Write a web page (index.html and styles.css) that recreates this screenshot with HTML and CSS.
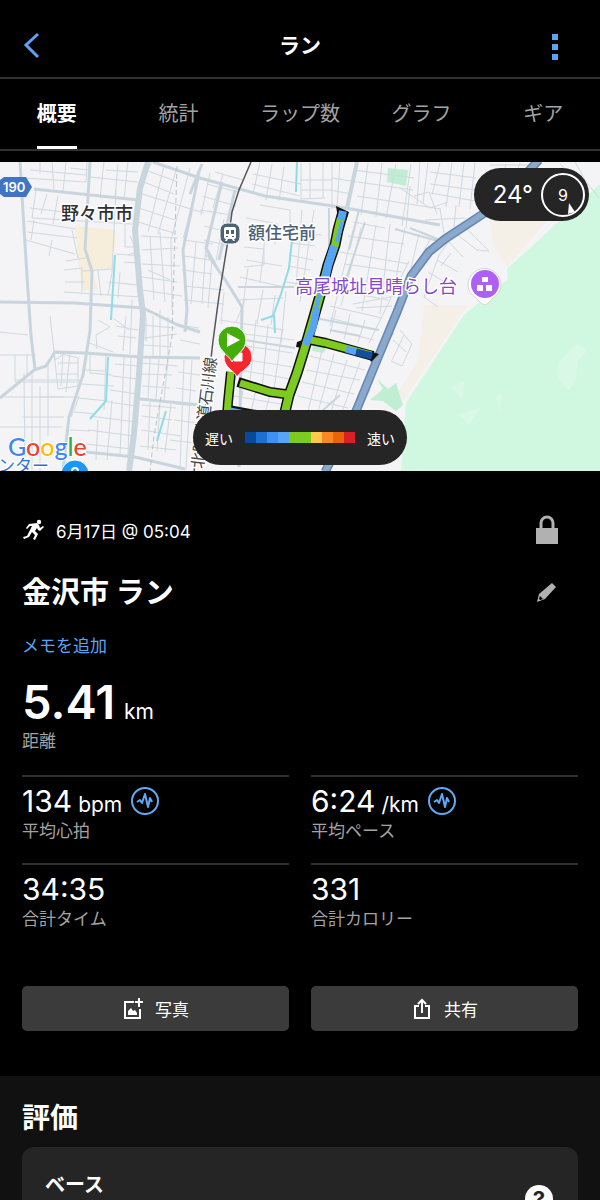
FILE: index.html
```html
<!DOCTYPE html>
<html lang="ja">
<head>
<meta charset="utf-8">
<meta name="viewport" content="width=device-width, initial-scale=1">
<title>ラン</title>
<link rel="stylesheet" href="styles.css">
</head>
<body>
<div class="app">
  <header class="topbar">
    <button class="icon-button" aria-label="戻る">
      <svg width="20" height="28" viewBox="0 0 20 28" fill="none" stroke="#5ba4f5" stroke-width="3"><path d="M16 2 4 13l12 12"/></svg>
    </button>
    <h1 class="topbar-title">ラン</h1>
    <button class="icon-button topbar-menu" aria-label="メニュー">
      <svg width="20" height="28" viewBox="0 0 20 28" fill="#5ba4f5"><path d="M7 2h6v6H7zM7 12h6v6H7zM7 22h6v6H7z"/></svg>
    </button>
  </header>

  <nav class="tabs">
    <a class="tab tab-active" href="#overview">概要</a>
    <a class="tab" href="#stats">統計</a>
    <a class="tab" href="#laps">ラップ数</a>
    <a class="tab" href="#charts">グラフ</a>
    <a class="tab" href="#gear">ギア</a>
  </nav>

  <section class="map" aria-label="ルートマップ">
    <svg class="map-canvas" viewBox="0 162 600 309" preserveAspectRatio="xMidYMid slice">
      <rect y="162" width="600" height="309" fill="#f4f3f6"/>
      <!-- land cover -->
      <path fill="#f4efe7" d="M489 205h72l-54 62-14-22zM424 305h44l-64 95-6-8 20-32z"/>
      <path fill="#f6eedb" d="M75 226l41 4-3 39-21 2 6 18-4 2-12-1-5-42z"/>
      <path fill="#d0f7e0" d="M600 184l-22 20-71 65 1 10-44 36-58 88-5 68h199z"/>
      <path fill="#d9f8e6" d="M576 344l12 6-10 11-2 18-7 12-12-14 2-15zM458 414l24-7-13 17zM496 397l6-5-3 22zM452 387l13-7-3 20z"/>
      <path fill="#bfeed3" d="M388 168l20 2-2 16-19-4zM377 379l11 10 8-6 7 22-7 6-13-10-13-1 13-11zM313 346l14 2-4 5-11-2z"/>

      <!-- side streets -->
      <g fill="none" stroke="#cfd9e0" stroke-width="1">
        <path d="M24 178l62 4 1-20M30 170l56 5M36 190l-4 28 100 6M40 162v12M52 162l2 27M66 162l-3 29M70 168l18 2M47 194l-6 20M58 196l-5 28M30 208l50 6M27 221l48 8M27 232l50 6M26 240l49 14M52 240l-3 16M34 220l-3 20M72 230l6 28M66 261l20-3M64 270l18-2v24M65 282h20M64 292l77 5M83 271l30-2M104 162l-4 36M118 164l-3 34M90 177l48 5M106 170l32 2M128 162l-4 37M116 190l-4 82-4 24M98 271l3 25M125 224v23h12M130 236l7 16-9 3M116 254l25 2M120 272l-2 26M108 282l30 3M124 262l12 1"/>
        <path d="M148 171l30 11M144 182l30 12M142 194l62 19M139 208l36 12M138 222l36 11M164 166l-16 66M176 170l-18 64M190 168l-18 68M152 162l-5 9M200 172l-16 64M141 236l37 2M142 250l36-2M142 264l38 2M142 277l35 5M142 290l40 6M150 236l4 64M160 232l5 70M171 238l1 72M148 270l22 10M183 240l30 4M184 256l26 4M182 270l30 4M184 286l40 4M184 300l40 4M196 242l-5 62M206 244l-4 60M192 214l-9 24"/>
        <path d="M202 196l34 10M207 184l31 8M215 172l28 8M200 210l31 5M223 174l-10 34M210 173l-9 42M213 216l-7 42M224 219l-8 42M204 226l24 6M204 240l22 5M212 258l-4 50M224 292l-3 32M260 162l-7 32M272 164l-6 36M253 174l48 10M252 184l48 12M284 167l-5 34M301 163v36l24-1M310 163v36M323 163v35M300 180h32M301 190h31M332 163v46M340 162l-3 46M332 178l25 4M330 190l22 4M260 205l30 5v20M246 218l32 6-3 20M244 247l20 2v16l-20 2M246 260l36 6M240 277l44 10M238 300l45-2M265 237l-5 46M248 268l-6 44M285 231l37 4M291 243l24 3M289 255l24 5M288 266l22 4M286 282l24 4M302 210l-6 76M314 210l-14 92M246 298l-10 24M263 290l-6 34M275 295l-4 30M286 291l-5 52"/>
        <path d="M354 170l60 8M358 182l55 8M357 196l84 13M353 222l32 6M348 236l56 8M340 252l69 12M344 264l58 8M338 278l58 10M336 290l52 10M330 306l52 12M368 163l-7 52M382 163l-6 54M396 164l-10 54M411 164l-9 62M420 162l-3 42M428 163l-5 40M400 188l30 20 18-6M410 186l-4 42M414 196l15-4 8 22M430 172l46 6M430 184l45 6M431 193l44 8M440 163l-8 32M452 163l-6 44M464 163l-5 44M475 163l-5 46M425 220l40-2M440 209l4 24M456 205l-2 22M405 228l-9 50M419 234l-8 34M430 240l-10 18M390 224l-10 90M376 225l-14 86M361 228l-20 78M353 230l-23 96M409 261l-40 82M395 296l-42 8M392 306l-36 2M464 226l25 25-12-1-22-17M455 233l-16 22-15 42 14 10M448 241l15 16M437 260l21 12M428 272l20 12M451 253l-10 13M490 165h50M506 164l-4 14M520 163l-4 12M400 330l12 14-10 22-11-5M404 335l-12 25M393 340l13 12M394 333l-7 9"/>
        <path d="M0 355h36M50 316l5 44 12-8M0 332l28 3M15 355v27h62M27 355v20M15 380h65M24 373l1 98M32 372v99M40 386v85M48 362v74M0 397h64M0 427h62M22 417h42M40 397h39l-8 20M54 352l24 6v28l-20 3zM58 363h20M56 374h22M63 352l-2 34M70 352l-4 40M83 370l22 1M82 384l32 2M78 398l30 3M74 412l22 2M70 430l20 1M90 353v20l22 2M106 354l-2 56M98 320l12 7-14 8 1 14M87 342l26 10M113 318l16 12M118 336l18 2M116 326l22 4M126 316l-3 35M132 300l-2 54M115 364l24 2M112 376l26 3M110 390l28 4M108 402l28 4M90 416l46 6M88 430l46 6M86 444l46 5M124 357l-4 99M131 358l-3 98M112 400l-5 60M98 420l-2 40"/>
        <path d="M143 325l32 3M144 338l33-4M146 317v24M153 316v40M160 310v46M168 317v39M143 345l30 2M142 363l36 3M142 374l30 1M142 386l28 2M150 359l-2 40M159 359l-3 40M168 360l-4 40M142 405l34 3M142 416l30 4M141 430l40 6M140 446l36 4M150 402l-2 48M160 403l-3 48M171 404l-6 48M179 325l20 3M180 340l20 4M178 372l22 3M176 388l20 3M184 360l-4 110M192 360l-6 110M176 404l22 2M174 420l24 3M170 440l24 3M220 320l64 10M244 334l50 6M240 345l52 8M242 359l50 8M240 370l50 9M256 320l-6 62M268 325l-6 64M282 330l-8 60M234 396l52 9M244 385l-5 27M256 390l-5 22M270 394l-5 20M310 356l55 14M306 370l54 10M302 382l52 12M298 396l50 12M322 350l-14 62M334 354l-16 58M347 360l-16 52M360 362l-18 50M358 336l16 4M330 318l46 12M336 310l-6 24M350 314l-6 25M365 320l-7 22M370 390l-12 22"/>
        <path d="M575 162l10 18 14 18M560 164l13 12"/>
      </g>

      <!-- main roads -->
      <g fill="none" stroke="#c9d5dd">
        <path stroke-width="3" d="M20 162l3 50 4 64 4 60 4 33M0 302l75 1 68 5M34 189l104 11M90 162l-4 70-1 17 7 22-2 60-7 44-14 42-6 53M0 398l34-28 12-4 9-14 30 1 55 4 60 1M143 308l35 17 22 7M198 178l-15 72 4 60-2 22M153 162l47 16M200 178l65 18 68 10 24 4 83 15M235 190l-16 70M217 268l-11-20 16-66M202 164l-12 30M208 255l18 26 16 26-3 160M140 399l60 6M86 452l49 5 50 12"/>
        <path stroke-width="2" d="M238 287h56M329 208v42M365 222l-20 60M395 229l50 14M245 340l50 8M410 228l35 14M330 330l30 6M340 395l-18 16M359 210l-10 40M315 318l64 12"/>
        <path stroke-width="6" d="M148 162l-8 26-5 42 5 60 3 24-4 60-5 60-5 37"/>
        <path stroke-width="4" d="M357 162l-10 46"/>
        <path stroke-width="1" stroke-dasharray="5 3" stroke="#bcc3c9" d="M177 166l-3 100-2 70-18 100-4 35"/>
      </g>

      <!-- waterways -->
      <g fill="none" stroke="#8ddce6" stroke-width="2">
        <path d="M297 162l-1 30M292 240l-3 28-8 26-8 22M273 316l-12 4M115 255l-4 65M108 357l-2 44-16 18M166 411l-9 30M274 315l1 18"/>
      </g>

      <!-- highway -->
      <path fill="none" stroke="#6587af" stroke-width="9" d="M539 160l-20 21-36 33-38 25-16 13-18 24-14 36-20 48-23 56-29 56"/>
      <path fill="none" stroke="#8ba8cd" stroke-width="6" d="M539 160l-20 21-36 33-38 25-16 13-18 24-14 36-20 48-23 56-29 56"/>

      <!-- railway -->
      <path fill="none" stroke="#55565b" stroke-width="1.5" d="M251 162l-12 28-7 22-3 22-10 62-6 45-8 70-11 60"/>

      <text class="map-label label-rail" transform="translate(203 469) rotate(-83)">北陸鉄道石川線</text>

      <!-- run track -->
      <g fill="none" stroke-linejoin="round">
        <path stroke="#111" stroke-width="11" d="M343 212l-5 18-3 15-7 20-7 27-8 28-7 24-9 29-8 22-4 17"/>
        <path stroke="#111" stroke-width="10" d="M306 339l20 4 47 13M292 395l-22-3-32-10M231 372l-3 30-1 14M228 410l28 5"/>
        <path fill="#111" d="M336 206l13 6-3 9-8-3zM297 342l11-4-2 15-4-5-6-1zM366 350l13 4-8 8z"/>
        <path stroke="#7ecb20" stroke-width="8" d="M341 218l-3 12-3 15-7 20-7 27-8 28-7 24-9 29-8 22-4 17"/>
        <path stroke="#7ecb20" stroke-width="7" d="M306 339l20 4 45 12M292 395l-22-3-30-9M231 372l-3 30-1 14"/>
        <path stroke="#55a4f5" stroke-width="8" d="M343 211l-2 9M334 246l-6 20-3 14"/>
        <path stroke="#55a4f5" stroke-width="7" d="M317 308l-4 20-8 17M346 349l10 3M230 411l20 4"/>
        <path stroke="#55a4f5" stroke-width="4" d="M342 222l-5 20M325 275l-11 40"/>
        <path stroke="#114f9c" stroke-width="7" d="M356 352l16 4"/>
      </g>

      <!-- finish and start pins -->
      <g stroke="#fff" stroke-width="1">
        <path fill="#f5262d" d="M237 377c-3-7-13-9-13-20a14 14 0 0 1 28 0c0 11-11 13-15 20z"/>
        <path fill="#fff" d="M234 353h8v8h-8z"/>
        <path fill="#45ad0b" d="M232 362c-3-7-14-11-14-22a14 14 0 0 1 28 0c0 11-11 15-14 22z"/>
        <path fill="#fff" stroke="none" d="M227 333l13 7-13 7z"/>
      </g>

      <!-- station -->
      <rect x="220" y="223" width="20" height="21" rx="7" fill="#4b6275" stroke="#fff"/>
      <path fill="#fff" fill-rule="evenodd" d="M226 227h8q2 0 2 2v8q0 2-2 2l1 2h-2l-1-2h-4l-1 2h-2l1-2q-2 0-2-2v-8q0-2 2-2zm0 3v4h3v-4zm5 0v4h3v-4zm-5 6v1h2v-1zm6 0v1h2v-1z"/>

      <!-- viewpoint pin -->
      <path fill="#fff" stroke="#d5d2dc" d="M485 305q-3 0-7-5c-4-4-10-7-10-15a16 16 0 0 1 33 0c0 8-6 11-10 15q-4 5-6 5z"/>
      <circle cx="485" cy="284" r="14" fill="#ad61f2"/>
      <path fill="#fff" d="M482 277h6v5h-6zM477 285h6v6h-6zM486 285h6v6h-6z"/>

      <!-- route shield -->
      <path fill="#4174c3" d="M0 180l4-3h22l6 10-6 10H4l-4-3z"/>
      <text class="shield-label" x="3" y="192">190</text>

      <text class="map-label label-city" x="61" y="220">野々市市</text>
      <text class="map-label label-station" x="248" y="239">額住宅前</text>
      <text class="map-label label-sight" x="295" y="293">高尾城址見晴らし台</text>

      <circle cx="75" cy="474" r="14" fill="#1898f8" stroke="#fff"/>
      <circle cx="75" cy="471" r="3" fill="none" stroke="#fff" stroke-width="2"/>
      <text class="map-label label-center" x="-2" y="472">ンター</text>
      <text class="map-brand" x="8" y="456"><tspan fill="#4285f4">G</tspan><tspan fill="#ea4335">o</tspan><tspan fill="#fbbc05">o</tspan><tspan fill="#4285f4">g</tspan><tspan fill="#34a853">l</tspan><tspan fill="#ea4335">e</tspan></text>
    </svg>

    <div class="weather">
      <span class="weather-temp">24°</span>
      <span class="weather-wind">9
        <svg class="wind-arrow" width="8" height="12" viewBox="0 0 8 12"><path fill="#fff" d="M2 0l6 9-7 2z"/></svg>
      </span>
    </div>

    <div class="legend">
      <span>遅い</span>
      <div class="legend-scale">
        <i class="s1"></i><i class="s2"></i><i class="s3"></i><i class="s4"></i><i class="s5"></i><i class="s5"></i><i class="s6"></i><i class="s7"></i><i class="s8"></i><i class="s9"></i>
      </div>
      <span>速い</span>
    </div>
  </section>

  <main class="summary" id="overview">
    <div class="row row-date">
      <svg width="24" height="24" viewBox="0 0 24 24" fill="#fff"><circle cx="17" cy="4" r="2.2"/><path d="M7 6l8-1 2 2 1 3 3-2 1 1-4 4-2-1-1-2-2 3 3 3-3 6-2-1 2-4-3-3-3 5-5 2-1-2 4-1 4-8 1-2-2 0-3 3-1-1z"/></svg>
      <span class="date">6月17日 @ 05:04</span>
      <button class="icon-button push" aria-label="非公開">
        <svg width="24" height="30" viewBox="0 0 24 30"><path fill="#b1b1b1" d="M1 13h22v16H1z"/><path fill="none" stroke="#b1b1b1" stroke-width="3" d="M6 14V8a6 6 0 0 1 12 0v6"/></svg>
      </button>
    </div>

    <div class="row row-name">
      <h2 class="activity-name">金沢市 ラン</h2>
      <button class="icon-button push" aria-label="名前を編集">
        <svg width="24" height="24" viewBox="0 0 24 24"><path fill="#b1b1b1" d="M2 21l2-8L17 2l4 4-11 12z"/><path fill="#000" d="M5 15l3 3-3 1-1-1z"/></svg>
      </button>
    </div>

    <a class="memo" href="#memo">メモを追加</a>

    <div class="distance">
      <div class="value value-big">5.41 <span class="unit">km</span></div>
      <div class="caption">距離</div>
    </div>

    <div class="metrics">
      <div class="metric">
        <div class="value">134 <span class="unit">bpm</span>
          <svg class="wave" width="30" height="30" viewBox="0 0 30 30" fill="none" stroke="#61a8f5"><circle cx="15" cy="15" r="13" stroke-width="2"/><path stroke-width="2" stroke-linejoin="round" d="M7 16l3-2 2 3 3-9 3 13 2-9 2 4"/></svg>
        </div>
        <div class="caption">平均心拍</div>
      </div>
      <div class="metric">
        <div class="value">6:24 <span class="unit">/km</span>
          <svg class="wave" width="30" height="30" viewBox="0 0 30 30" fill="none" stroke="#61a8f5"><circle cx="15" cy="15" r="13" stroke-width="2"/><path stroke-width="2" stroke-linejoin="round" d="M7 16l3-2 2 3 3-9 3 13 2-9 2 4"/></svg>
        </div>
        <div class="caption">平均ペース</div>
      </div>
      <div class="metric">
        <div class="value">34:35</div>
        <div class="caption">合計タイム</div>
      </div>
      <div class="metric">
        <div class="value">331</div>
        <div class="caption">合計カロリー</div>
      </div>
    </div>

    <div class="actions">
      <button class="action">
        <svg width="22" height="22" viewBox="0 0 22 22" fill="none" stroke="#fff" stroke-width="2"><path d="M12 4H3v16h15v-9M17 0v9M13 4h8"/><path fill="#fff" stroke="none" d="M6 17v-4l3-3 2 3 2-1 2 3v2z"/></svg>
        <span>写真</span>
      </button>
      <button class="action">
        <svg width="22" height="22" viewBox="0 0 22 22" fill="none" stroke="#fff" stroke-width="2"><path d="M8 8H4v12h14V8h-4M11 15V3M7 6l4-4 4 4"/></svg>
        <span>共有</span>
      </button>
    </div>
  </main>

  <section class="ratings">
    <h2 class="ratings-title">評価</h2>
    <div class="card">
      <h3 class="card-title">ベース</h3>
      <button class="help" aria-label="ヘルプ">?</button>
    </div>
  </section>
</div>
</body>
</html>
```
FILE: styles.css
```css
* { box-sizing: border-box; }

body {
  margin: 0;
  background: #000;
  color: #fff;
  font-family: Inter, "Noto Sans CJK JP", sans-serif;
  font-size: 17px;
}

h1, h2, h3 { margin: 0; }

button {
  border: 0;
  padding: 0;
  background: none;
  color: inherit;
  font: inherit;
  cursor: pointer;
}

a { text-decoration: none; }

svg { display: block; flex: none; }

.app {
  height: 100vh;
  overflow: hidden auto;
  scrollbar-width: none;
}

.topbar {
  display: grid;
  grid-template-columns: 1fr auto 1fr;
  align-items: center;
  justify-items: start;
  height: 79px;
  padding: 15px 22px 0;
  border-bottom: 2px solid #303030;
}

.topbar-title { font-size: 21px; line-height: 30px; }
.topbar-menu { justify-self: end; margin-right: 13px; }

.tabs {
  display: grid;
  grid-template-columns: repeat(5, 1fr);
  justify-items: center;
  height: 72px;
  margin: 0 -4px 11px;
  border-bottom: 2px solid #303030;
}

.tab {
  padding-top: 4px;
  line-height: 63px;
  font-size: 20px;
  color: #a3a3a3;
}

.tab-active {
  color: #fff;
  font-weight: 700;
  border-bottom: 3px solid #fff;
}

.map { position: relative; height: 309px; overflow: hidden; }

.map-canvas { width: 100%; height: 100%; }

.map-label {
  font-family: "Noto Sans CJK JP", sans-serif;
  paint-order: stroke;
  stroke: #fff;
  stroke-width: 3px;
  stroke-linejoin: round;
}

.label-city { font-size: 18px; font-weight: 500; fill: #303034; }
.label-station { font-size: 17px; font-weight: 500; fill: #4b6275; }
.label-sight { font-size: 18px; fill: #8548c8; }
.label-rail { font-size: 16px; fill: #45464b; }
.label-center { font-size: 17px; fill: #2f72cf; }
.shield-label { font: 600 13px Inter, sans-serif; fill: #fff; }

.map-brand {
  font: 500 25px Lato, sans-serif;
  paint-order: stroke;
  stroke: #fff;
  stroke-width: 2px;
}

.weather, .legend {
  position: absolute;
  display: flex;
  align-items: center;
  background: #252525;
  border-radius: 28px;
}

.weather {
  top: 6px;
  right: 11px;
  height: 53px;
  padding: 0 4px 0 19px;
  gap: 8px;
}

.weather-temp { font-size: 24px; }

.weather-wind {
  position: relative;
  width: 44px;
  height: 44px;
  border: 2px solid #fff;
  border-radius: 50%;
  font-size: 16px;
  line-height: 40px;
  text-align: center;
}

.wind-arrow { position: absolute; right: 8px; bottom: 0; }

.legend {
  left: 50%;
  bottom: 6px;
  transform: translateX(-50%);
  height: 55px;
  padding: 0 12px;
  gap: 12px;
  font-size: 14px;
  white-space: nowrap;
}

.legend-scale { display: flex; }
.legend-scale i { width: 11px; height: 11px; }
.s1 { background: #08499c; }
.s2 { background: #1b70d2; }
.s3 { background: #3c91f2; }
.s4 { background: #58a5f8; }
.s5 { background: #7ecb20; }
.s6 { background: #fdc84b; }
.s7 { background: #fa8724; }
.s8 { background: #e96409; }
.s9 { background: #d82127; }

.summary { padding: 42px 22px 45px; }

.row { display: flex; align-items: center; }
.row-date { height: 34px; gap: 10px; padding-right: 19px; }
.row-name { height: 40px; margin-top: 26px; padding-right: 19px; }
.push { margin-left: auto; }
.activity-name { font-size: 29px; line-height: 40px; }

.memo {
  display: block;
  margin-top: 21px;
  line-height: 24px;
  color: #5ba4f5;
}

.value {
  display: flex;
  align-items: baseline;
  gap: 6px;
  font-size: 30px;
  line-height: 36px;
}

.value-big {
  gap: 9px;
  font-size: 47px;
  font-weight: 600;
  line-height: 56px;
}

.unit { font-size: 21px; font-weight: 400; line-height: 24px; }
.wave { align-self: center; margin-left: 2px; }
.caption { line-height: 24px; color: #a3a3a3; }

.distance { margin-top: 16px; }
.distance .caption { line-height: 22px; }

.metrics {
  display: grid;
  grid-template-columns: 1fr 1fr;
  column-gap: 22px;
  margin-top: 23px;
}

.metric {
  height: 88px;
  padding-top: 6px;
  border-top: 2px solid #303030;
}

.actions {
  display: grid;
  grid-template-columns: 1fr 1fr;
  gap: 22px;
  margin-top: 35px;
}

.action {
  display: flex;
  align-items: center;
  justify-content: center;
  gap: 11px;
  height: 45px;
  border-radius: 5px;
  background: #3b3b3b;
}

.ratings { padding: 22px 22px 24px; background: #111; }
.ratings-title { font-size: 28px; line-height: 40px; }

.card {
  display: flex;
  align-items: flex-start;
  justify-content: space-between;
  min-height: 240px;
  margin-top: 9px;
  padding: 23px 25px 23px 23px;
  border-radius: 12px;
  background: #252525;
}

.card-title { font-size: 20px; line-height: 30px; }

.help {
  width: 28px;
  height: 28px;
  margin-top: 15px;
  border-radius: 50%;
  background: #fff;
  color: #252525;
  font-size: 22px;
  font-weight: 700;
  line-height: 28px;
}
```
